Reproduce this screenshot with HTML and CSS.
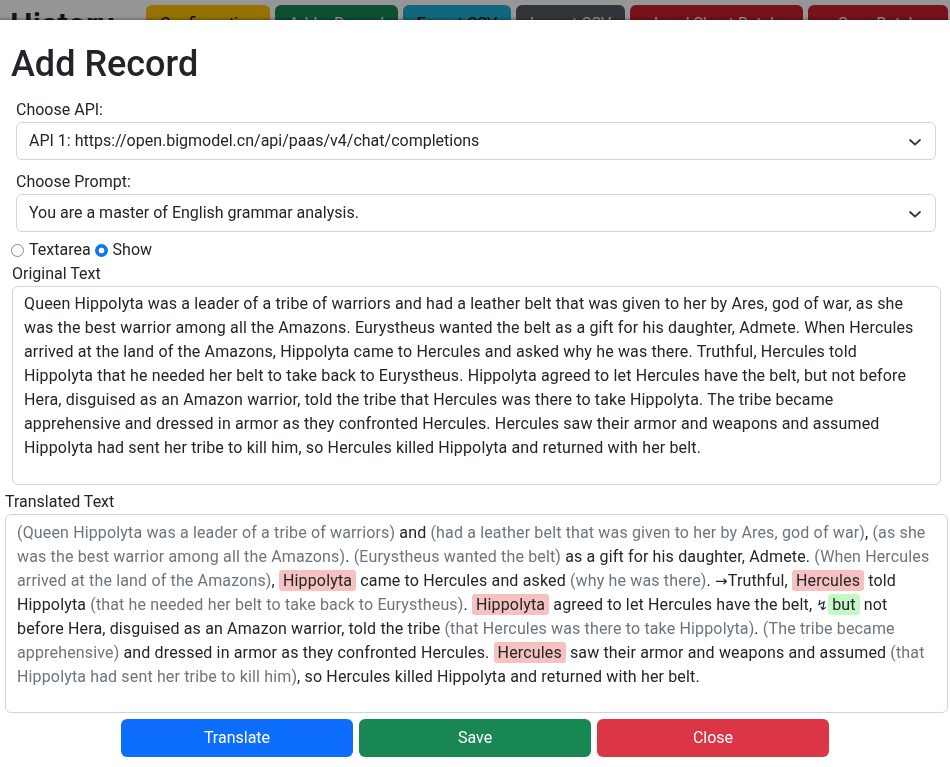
FILE: index.html
```html
<!DOCTYPE html>
<html lang="en">
<head>
<meta charset="utf-8">
<title>Add Record</title>
<link rel="stylesheet" href="styles.css">
</head>
<body>
<div class="page">
  <h2 class="page-title">History</h2>
  <div class="toolbar">
    <button class="tbtn warn w-config">Configuration</button>
    <button class="tbtn success w-add">Add a Record</button>
    <button class="tbtn info w-export">Export CSV</button>
    <button class="tbtn dark w-import">Import CSV</button>
    <button class="tbtn danger w-load">Load Sheet Batch</button>
    <button class="tbtn danger w-save">Save Batch</button>
  </div>
</div>
<div class="backdrop"></div>
<div class="modal">
  <h1 class="modal-title">Add Record</h1>
  <div class="form">
    <label class="lbl">Choose API:</label>
    <div class="select">
      <span>API 1: https://open.bigmodel.cn/api/paas/v4/chat/completions</span>
      <svg class="chev" width="14" height="10" viewBox="0 0 14 10"><polyline points="2,3 7,7.5 12,3" fill="none" stroke="#343a40" stroke-width="1.8" stroke-linecap="round" stroke-linejoin="round"/></svg>
    </div>
    <label class="lbl lbl2">Choose Prompt:</label>
    <div class="select">
      <span>You are a master of English grammar analysis.</span>
      <svg class="chev" width="14" height="10" viewBox="0 0 14 10"><polyline points="2,3 7,7.5 12,3" fill="none" stroke="#343a40" stroke-width="1.8" stroke-linecap="round" stroke-linejoin="round"/></svg>
    </div>
  </div>
  <div class="radios">
    <label class="radio"><span class="dot"></span>Textarea</label>
    <label class="radio"><span class="dot on"></span>Show</label>
  </div>
  <div class="orig-label">Original Text</div>
  <div class="orig-box">Queen Hippolyta was a leader of a tribe of warriors and had a leather belt that was given to her by Ares, god of war, as she<br>was the best warrior among all the Amazons. Eurystheus wanted the belt as a gift for his daughter, Admete. When Hercules<br>arrived at the land of the Amazons, Hippolyta came to Hercules and asked why he was there. Truthful, Hercules told<br>Hippolyta that he needed her belt to take back to Eurystheus. Hippolyta agreed to let Hercules have the belt, but not before<br>Hera, disguised as an Amazon warrior, told the tribe that Hercules was there to take Hippolyta. The tribe became<br>apprehensive and dressed in armor as they confronted Hercules. Hercules saw their armor and weapons and assumed<br>Hippolyta had sent her tribe to kill him, so Hercules killed Hippolyta and returned with her belt.</div>
  <div class="trans-label">Translated Text</div>
  <div class="trans-box"><span class="cl">(Queen Hippolyta was a leader of a tribe of warriors)</span> and <span class="cl">(had a leather belt that was given to her by Ares, god of war)</span>, <span class="cl">(as she<br>was the best warrior among all the Amazons)</span>. <span class="cl">(Eurystheus wanted the belt)</span> as a gift for his daughter, Admete. <span class="cl">(When Hercules<br>arrived at the land of the Amazons)</span>, <span class="hl">Hippolyta</span> came to Hercules and asked <span class="cl">(why he was there)</span>. <span class="arr">→</span>Truthful, <span class="hl">Hercules</span> told<br>Hippolyta <span class="cl">(that he needed her belt to take back to Eurystheus)</span>. <span class="hl">Hippolyta</span> agreed to let Hercules have the belt, <span class="zz">↯</span><span class="gl">but</span> not<br>before Hera, disguised as an Amazon warrior, told the tribe <span class="cl">(that Hercules was there to take Hippolyta)</span>. <span class="cl">(The tribe became<br>apprehensive)</span> and dressed in armor as they confronted Hercules. <span class="hl">Hercules</span> saw their armor and weapons and assumed <span class="cl">(that<br>Hippolyta had sent her tribe to kill him)</span>, so Hercules killed Hippolyta and returned with her belt.</div>
  <div class="actions">
    <button class="btn blue">Translate</button>
    <button class="btn green">Save</button>
    <button class="btn red">Close</button>
  </div>
</div>
</body>
</html>
```
FILE: styles.css
```css
* { box-sizing: border-box; }
html, body { margin: 0; height: 100%; }
body {
  font-family: Roboto, "Liberation Sans", sans-serif;
  font-size: 16px;
  line-height: 1.5;
  color: #212529;
  background: #fff;
  overflow: hidden;
}
.page {
  display: flex;
  align-items: flex-start;
  padding: 5px 2px 0 10px;
}
.page-title {
  margin: 0;
  font-size: 32px;
  font-weight: 600;
  line-height: 1.2;
  width: 136px;
}
.toolbar { display: flex; gap: 5px; }
.tbtn {
  height: 38px;
  border: none;
  border-radius: 6px;
  font: inherit;
  color: #fff;
  padding: 0;
}
.warn { background: #ffc107; color: #000; }
.success { background: #198754; }
.info { background: #1fb0da; color: #000; }
.dark { background: #545b62; }
.danger { background: #c8202e; }
.w-config { width: 124px; }
.w-add { width: 123px; }
.w-export { width: 108px; }
.w-import { width: 109px; }
.w-load { width: 173px; }
.w-save { width: 140px; }
.backdrop {
  position: fixed;
  inset: 0;
  background: rgba(0, 0, 0, 0.41);
}
.modal {
  position: absolute;
  top: 20px;
  left: 0;
  right: 0;
  bottom: 0;
  background: #fff;
  box-shadow: 0 -1px 3px rgba(0, 0, 0, 0.35);
  padding-top: 23px;
}
.modal-title {
  margin: 0 0 12px 11px;
  font-size: 36px;
  font-weight: 500;
  line-height: 1.2;
}
.form { padding: 0 14px 0 16px; }
.lbl { display: block; }
.lbl2 { margin-top: 10px; }
.select {
  position: relative;
  height: 38px;
  border: 1px solid #ced4da;
  border-radius: 6px;
  padding: 6px 36px 6px 12px;
}
.chev { position: absolute; right: 13px; top: 14px; }
.radios {
  display: flex;
  gap: 4px;
  padding-left: 11px;
  margin-top: 6px;
}
.radio { display: flex; align-items: center; }
.dot {
  width: 13px;
  height: 13px;
  border-radius: 50%;
  border: 1px solid #8a8a8a;
  margin-right: 5px;
  background: #fff;
}
.dot.on {
  border: none;
  background: radial-gradient(circle, #fff 0 2.6px, #0a76f6 3.2px);
}
.orig-label { padding-left: 12px; }
.orig-box {
  margin: 0 9px 0 12px;
  height: 199px;
  border: 1px solid #ced4da;
  border-radius: 6px;
  padding: 5px 11px;
  white-space: nowrap;
  overflow: hidden;
  letter-spacing: 0.15px;
}
.trans-label { padding-left: 5px; margin-top: 5px; }
.trans-box {
  margin: 0 2px 0 5px;
  height: 199px;
  border: 1px solid #ced4da;
  border-radius: 6px;
  padding: 6px 11px;
  white-space: nowrap;
  overflow: hidden;
  letter-spacing: 0.15px;
}
.cl { color: #6c757d; }
.hl {
  background: #f8c1c1;
  border-radius: 3px;
  padding: 1px 4px;
}
.gl {
  background: #c6f7c6;
  border-radius: 3px;
  padding: 1px 4px;
}
.arr { font-family: "DejaVu Sans", sans-serif; font-size: 15px; }
.zz { font-family: "DejaVu Sans", sans-serif; font-size: 14px; }
.actions {
  display: flex;
  justify-content: center;
  gap: 6px;
  margin-top: 6px;
}
.btn {
  width: 232px;
  height: 38px;
  border: none;
  border-radius: 6px;
  color: #fff;
  font: inherit;
}
.blue { background: #0d6efd; }
.green { background: #198754; }
.red { background: #dc3545; }
```
